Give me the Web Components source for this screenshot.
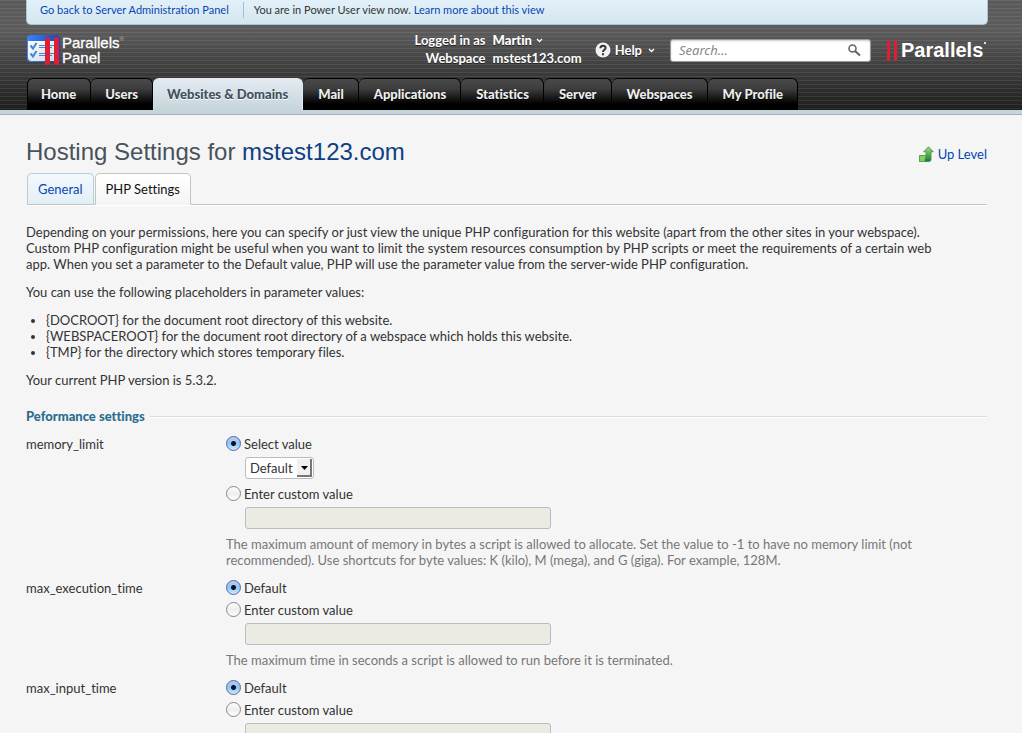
<!DOCTYPE html>
<html lang="en">
<head>
<meta charset="utf-8">
<title>Hosting Settings for mstest123.com</title>
<style>
  html { overflow-x: hidden; }
  body {
    margin: 0;
    background: #f5f5f5;
    color: #333;
    font: 13px/16px Lato, "Noto Sans", sans-serif;
    font-variant-ligatures: none;
  }
</style>
</head>
<body>
<panel-page></panel-page>

<template id="t-panel-page">
  <style>
    :host { display: block; }
    main { padding: 21px 35px 24px 26px; }
    p { margin: 0 0 12px; }
    ul { margin: 0 0 12px; padding: 0 0 0 20px; }
    .intro { padding-top: 19px; margin-bottom: 20px; }
  </style>
  <site-header></site-header>
  <main>
    <page-heading>Hosting Settings for <a slot="domain" href="#domain">mstest123.com</a></page-heading>
    <content-tabs></content-tabs>
    <div class="intro">
      <p>Depending on your permissions, here you can specify or just view the unique PHP configuration for this website (apart from the other sites in your webspace).<br>Custom PHP configuration might be useful when you want to limit the system resources consumption by PHP scripts or meet the requirements of a certain web<br>app. When you set a parameter to the Default value, PHP will use the parameter value from the server-wide PHP configuration.</p>
      <p>You can use the following placeholders in parameter values:</p>
      <ul>
        <li>{DOCROOT} for the document root directory of this website.</li>
        <li>{WEBSPACEROOT} for the document root directory of a webspace which holds this website.</li>
        <li>{TMP} for the directory which stores temporary files.</li>
      </ul>
      <p>Your current PHP version is 5.3.2.</p>
    </div>
    <settings-group heading="Peformance settings">
      <php-setting name="memory_limit" option="Select value" choices="Default">The maximum amount of memory in bytes a script is allowed to allocate. Set the value to -1 to have no memory limit (not<br>recommended). Use shortcuts for byte values: K (kilo), M (mega), and G (giga). For example, 128M.</php-setting>
      <php-setting name="max_execution_time" option="Default">The maximum time in seconds a script is allowed to run before it is terminated.</php-setting>
      <php-setting name="max_input_time" option="Default"></php-setting>
    </settings-group>
  </main>
</template>

<template id="t-site-header">
  <style>
    :host {
      display: block;
      padding: 0 34px 4px 27px;
      background:
        repeating-linear-gradient(rgba(255,255,255,.08) 0 1px, transparent 1px 4px),
        linear-gradient(#5a5a5a 0, #5c5c5c 30px, #1e1e1e 110px);
      border-bottom: 1px solid #9fb2bd;
      box-shadow: inset 0 -4px #c6d5da;
      color: #fff;
    }
    a { color: inherit; text-decoration: none; }
    .notice {
      display: flex; align-items: center; height: 25px; margin-left: -1px; padding: 0 13px 4px; box-sizing: border-box;
      background: linear-gradient(#e2f0f9, #d5e7f0); color: #333; font-size: 11px;
      border: solid #a9c6d4; border-width: 0 1px 1px; border-radius: 0 0 5px 5px;
    }
    .notice a { color: #0645b4; }
    .notice .back { padding-right: 14px; margin-right: 10px; border-right: 1px solid #9cc3d6; }
    .notice span { white-space: pre; }
    .bar { display: flex; align-items: center; height: 53px; padding-bottom: 3px; box-sizing: border-box; }
    .who { margin-left: auto; display: grid; grid-template-columns: auto auto; column-gap: 7px; line-height: 18px; text-shadow: 0 1px #222; font-weight: 700; padding-bottom: 2px; }
    .who span { text-align: right; }
    .who b { font-weight: 900; }
    button { font: inherit; font-weight: 700; color: #fff; background: none; border: 0; padding: 0; display: flex; align-items: center; text-shadow: 0 1px #222; }
    .help { margin: 0 15px 0 13px; gap: 4px; }
    .chev { width: 7px; height: 5px; margin: 0 0 2px 4px; }
    .help .chev { margin-left: 2px; margin-bottom: 0; }
  </style>
  <div class="notice">
    <a class="back" href="#admin">Go back to Server Administration Panel</a>
    <span>You are in Power User view now. </span><a href="#learn">Learn more about this view</a>
  </div>
  <div class="bar">
    <panel-logo></panel-logo>
    <div class="who">
      <span>Logged in as</span>
      <a href="#account"><b>Martin</b><svg class="chev" viewBox="0 0 7 5"><path d="M1 1l2.500 2.500L6 1" fill="none" stroke="#fff" stroke-width="1.300"/></svg></a>
      <span>Webspace</span><a href="#webspace">mstest123.com</a>
    </div>
    <button class="help" type="button">
      <svg width="16" height="16" viewBox="0 0 16 16"><circle cx="8" cy="8" r="7.500" fill="#f2f2f2"/><path d="M5.400 6.300C5.400 3 10.700 3.100 10.600 6c0 1.800-2.600 1.900-2.600 4M8 11.200v2" fill="none" stroke="#333" stroke-width="2"/></svg>
      Help
      <svg class="chev" viewBox="0 0 7 5"><path d="M1 1l2.500 2.500L6 1" fill="none" stroke="#fff" stroke-width="1.300"/></svg>
    </button>
    <search-box></search-box>
    <company-logo></company-logo>
  </div>
  <main-nav></main-nav>
</template>

<template id="t-panel-logo">
  <style>
    :host { display: flex; gap: 2px; align-items: center; font: 15px/15px "Liberation Sans", Arial, sans-serif; color: #fff; -webkit-text-stroke: 0.300px #fff; }
    span { display: block; }
    .name { display: flex; align-items: flex-start; }
    small { font-size: 6px; line-height: 8px; color: #bbb; -webkit-text-stroke: 0; }
    svg { display: block; }
    .words { padding-bottom: 1px; }
  </style>
  <svg width="33" height="31" viewBox="0 0 33 31">
    <defs>
      <linearGradient id="b" x2="1"><stop stop-color="#3b83fa"/><stop offset="1" stop-color="#1646b8"/></linearGradient>
      <linearGradient id="w" x2="1" y2="1"><stop stop-color="#fff"/><stop offset="1" stop-color="#d2d7de"/></linearGradient>
    </defs>
    <rect width="33" height="27" rx="4" fill="url(#b)"/>
    <path d="M1 6h31v16q0 4-4 4H5q-4 0-4-4z" fill="url(#w)"/>
    <path d="M12 10.500h19M12 12.500h13M12 18.500h19M12 20.500h13" stroke="#3e86df"/>
    <path d="M3.500 10.500l2.500 3L9.500 8M3.500 18.500l2.500 3L9.500 16" stroke="#3e86df" stroke-width="2" fill="none"/>
    <rect x="18" y="2" width="5" height="28" rx="2" fill="#dc2033"/>
    <rect x="27" y="2" width="5" height="28" rx="2" fill="#dc2033"/>
  </svg>
  <div class="words"><span class="name">Parallels<small>®</small></span><span>Panel</span></div>
</template>

<template id="t-search-box">
  <style>
    :host { display: flex; align-items: center; width: 201px; height: 23px; box-sizing: border-box; background: #fff; border: 1px solid #999; border-radius: 3px; box-shadow: inset 0 1px 2px #ccc; }
    input { flex: 1; min-width: 0; border: 0; padding: 0 8px; background: none; font: italic 13px/16px "Noto Sans", sans-serif; outline: 0; }
    input::placeholder { color: #888; opacity: 1; }
    button { border: 0; background: none; padding: 0 9px; height: 14px; }
    svg { display: block; }
  </style>
  <input type="search" aria-label="Search" placeholder="Search...">
  <button type="submit" aria-label="Run search"><svg width="13" height="13" viewBox="0 0 13 13"><circle cx="4.500" cy="4.500" r="3.500" fill="none" stroke="#666" stroke-width="1.600"/><path d="M7 7l5 4.500" stroke="#666" stroke-width="2.200"/></svg></button>
</template>

<template id="t-company-logo">
  <style>
    :host { display: flex; align-items: center; min-width: 101px; margin-left: 16px; gap: 4px; font: 700 20px/21px "Liberation Sans", Arial, sans-serif; color: #fff; }
    svg { display: block; }
    .dot { align-self: flex-start; width: 2px; height: 2px; margin: 2px 0 0 -3px; background: #ddd; }
  </style>
  <svg width="10" height="21" viewBox="0 0 10 21"><rect width="3" height="21" rx="1" fill="#dc2033"/><rect x="7" width="3" height="21" rx="1" fill="#dc2033"/></svg>
  <span>Parallels</span><i class="dot"></i>
</template>

<template id="t-main-nav">
  <style>
    nav { display: flex; height: 32px; }
    a {
      display: flex; align-items: center; padding: 0 14px 1px 13px; box-sizing: border-box;
      border: solid #000; border-width: 1px 1px 0 0; border-radius: 6px 6px 0 0;
      background: linear-gradient(#4a4a4a, #3c3c3c 10px, #000 25px);
      color: #eee; text-decoration: none; font-weight: 900; text-shadow: 0 1px #000;
    }
    a + a { padding-left: 14px; }
    a:first-child { border-left-width: 1px; }
    a[aria-current] { background: linear-gradient(#e3eaf2, #c6d5da); color: #40505c; text-shadow: 0 1px #fff; border-color: #e3eaf2; }
    a[aria-current] ~ a { padding-left: 15px; }
  </style>
  <nav>
    <a href="#home">Home</a><a href="#users">Users</a><a href="#sites" aria-current="page">Websites &amp; Domains</a><a href="#mail">Mail</a><a href="#apps">Applications</a><a href="#stats">Statistics</a><a href="#server">Server</a><a href="#webspaces">Webspaces</a><a href="#profile">My Profile</a>
  </nav>
</template>

<template id="t-page-heading">
  <style>
    :host { display: flex; align-items: center; justify-content: space-between; height: 32px; margin-bottom: 5px; }
    h1 { margin: 0; font: 24px/34px "Liberation Sans", Arial, sans-serif; color: #48525b; }
    ::slotted(a) { color: #0d3f83; text-decoration: none; }
    .up { display: flex; align-items: center; gap: 4px; color: #0645b4; text-decoration: none; padding-top: 4px; }
  </style>
  <h1><slot></slot><slot name="domain"></slot></h1>
  <a class="up" href="#up"><svg width="15" height="16" viewBox="0 0 15 16"><defs><linearGradient id="g" y2="1" x2="0"><stop stop-color="#9be07d"/><stop offset="1" stop-color="#167a35"/></linearGradient></defs><rect x=".5" y="9.500" width="7" height="6" fill="#80cf65" stroke="#58a848"/><path d="M9.500.8l4.800 5H12v7.700q0 2-2 2H6V13q1-.5 1-2V5.800H4.700z" fill="url(#g)" stroke="#3f8a4a" stroke-width=".8"/></svg>Up Level</a>
</template>

<template id="t-content-tabs">
  <style>
    :host { display: flex; gap: 1px; height: 32px; margin-left: 1px; border-bottom: 1px solid #c4c4c4; box-sizing: border-box; box-shadow: 0 1px #fff; }
    a { display: flex; align-items: center; height: 32px; box-sizing: border-box; padding: 0 10px; border: 1px solid #b3cfde; border-bottom-color: #c4c4c4; border-radius: 5px 5px 0 0; background: linear-gradient(#f2f9fe, #e2eff6); color: #0645b4; text-decoration: none; }
    a[aria-current] { background: linear-gradient(#fff, #f5f5f5); border-color: #c4c4c4; border-bottom-color: #f5f5f5; color: #111; }
  </style>
  <a href="#general">General</a><a href="#php" aria-current="page">PHP Settings</a>
</template>

<template id="t-settings-group">
  <style>
    :host { display: block; }
    h2 { display: flex; align-items: center; gap: 5px; margin: 0 0 12px; font-size: 13px; line-height: 16px; font-weight: 900; color: #2a6d8f; }
    h2::after { content: ""; flex: 1; height: 1px; background: #d5dade; box-shadow: 0 1px #fff; }
  </style>
  <h2></h2>
  <slot></slot>
</template>

<template id="t-php-setting">
  <style>
    :host { display: grid; grid-template-columns: 200px 1fr; margin-bottom: 12px; }
    .choice { display: flex; align-items: center; gap: 3px; height: 16px; }
    .choice + .choice { margin-top: 6px; }
    input[type=radio] {
      appearance: none; width: 15px; height: 15px; margin: 0 0 2px; box-sizing: border-box; border: 1px solid #888; border-radius: 50%;
      background: linear-gradient(#fff, #eee 50%, #fff);
    }
    input[type=radio]:checked { border-color: #5565a8; background: radial-gradient(circle, #0a1228 0 2px, transparent 3px), linear-gradient(#b6cdee, #8fc4f4 50%, #c9ecff); }
    input[type=text], .select { display: block; box-sizing: border-box; height: 22px; margin: 5px 0 7px 19px; border: 1px solid #b9bcc0; border-radius: 3px; }
    input[type=text] { width: 306px; max-width: calc(100% - 19px); background: #ebebe3; font: inherit; padding: 0 4px; }
    .select { position: relative; width: 69px; background: #fff; }
    select { appearance: none; width: 100%; height: 20px; border: 0; background: none; padding: 0 16px 0 4px; font: inherit; color: #333; }
    .select svg { position: absolute; right: 1px; top: 1px; pointer-events: none; }
    .help { color: #777; }
  </style>
  <div class="name"></div>
  <div class="body">
    <label class="choice"><input type="radio" name="mode" checked><span class="option"></span></label>
    <label class="choice custom"><input type="radio" name="mode"><span id="custom">Enter custom value</span></label>
    <input type="text" aria-labelledby="custom" disabled>
    <div class="help"><slot></slot></div>
  </div>
</template>

<script>
  const attach = (el, id) => {
    const root = el.attachShadow({ mode: "open" });
    root.append(document.getElementById("t-" + id).content.cloneNode(true));
    return root;
  };

  for (const id of ["main-nav", "panel-logo", "search-box", "company-logo", "site-header", "page-heading", "content-tabs"]) {
    customElements.define(id, class extends HTMLElement {
      constructor() { super(); attach(this, id); }
    });
  }

  customElements.define("settings-group", class extends HTMLElement {
    connectedCallback() {
      if (this.shadowRoot) return;
      attach(this, "settings-group").querySelector("h2").textContent = this.getAttribute("heading");
    }
  });

  customElements.define("php-setting", class extends HTMLElement {
    connectedCallback() {
      if (this.shadowRoot) return;
      const root = attach(this, "php-setting");
      root.querySelector(".name").textContent = this.getAttribute("name");
      root.querySelector(".option").textContent = this.getAttribute("option");
      const choices = this.getAttribute("choices");
      if (choices) {
        const box = document.createElement("div");
        box.className = "select";
        const select = document.createElement("select");
        select.setAttribute("aria-label", this.getAttribute("name"));
        for (const c of choices.split(",")) select.add(new Option(c));
        box.append(select);
        box.insertAdjacentHTML("beforeend", '<svg width="15" height="18" viewBox="0 0 15 18"><rect width="15" height="18" fill="#f0f0f0"/><path d="M14 0v17H0" fill="none" stroke="#777" stroke-width="2"/><path d="M4 7h7l-3.500 4z" fill="#000"/></svg>');
        root.querySelector(".custom").before(box);
      }
      const custom = root.querySelectorAll("input[type=radio]")[1];
      const text = root.querySelector("input[type=text]");
      root.addEventListener("change", () => { text.disabled = !custom.checked; });
    }
  });

  customElements.define("panel-page", class extends HTMLElement {
    constructor() { super(); attach(this, "panel-page"); }
  });
</script>
</body>
</html>
